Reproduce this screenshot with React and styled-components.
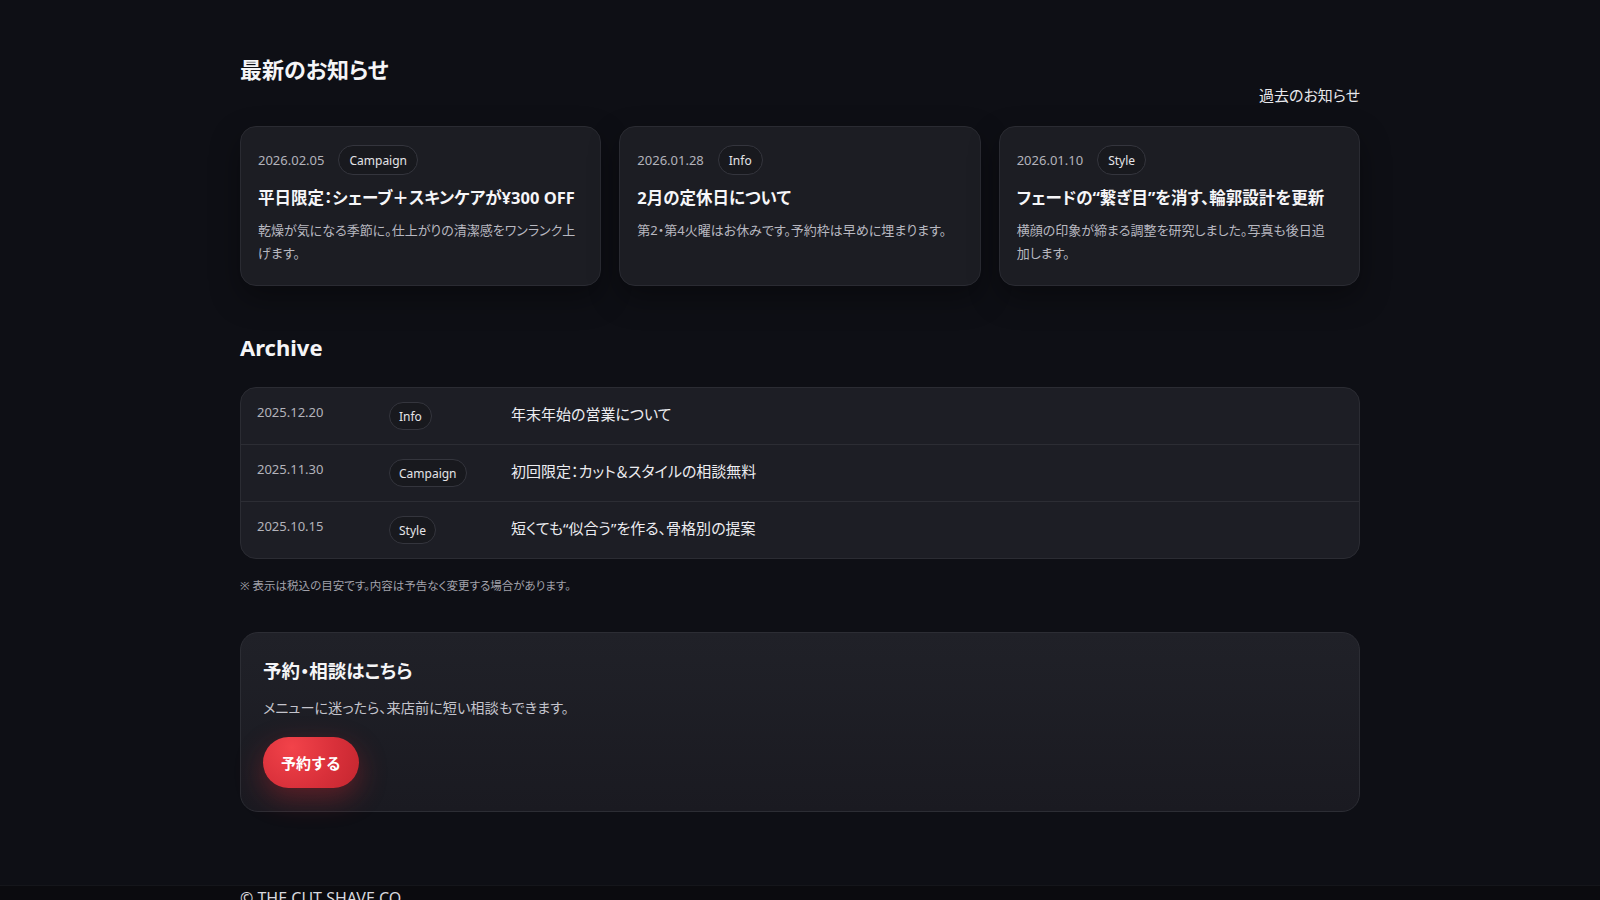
import React from 'react';
import styled, { createGlobalStyle } from 'styled-components';

const GlobalStyle = createGlobalStyle`
  * { box-sizing: border-box; }
  body {
    margin: 0;
    background: #0e0f15;
    color: #f2f2f5;
    font-family: "Noto Sans", "Noto Sans CJK JP", sans-serif;
    font-feature-settings: "palt";
  }
`;

const Main = styled.main`
  width: 1120px;
  margin: 0 auto;
  padding: 52px 0 73px;
`;

const HeaderRow = styled.div`
  display: flex;
  justify-content: space-between;
  align-items: flex-end;
  margin-bottom: 19px;
`;

const Heading = styled.h2`
  margin: ${(p) => (p.$top ? '0 0 21px' : '44px 0 23px')};
  font-size: 22px;
  line-height: 34px;
  font-weight: 700;
  color: #f5f5f7;
`;

const MoreLink = styled.a`
  font-size: 15px;
  line-height: 24px;
  color: #e8e8ec;
  text-decoration: none;
`;

const CardGrid = styled.div`
  display: grid;
  grid-template-columns: repeat(3, 1fr);
  gap: 18px;
`;

const Card = styled.article`
  background: #1c1d23;
  border: 1px solid #2a2b32;
  border-radius: 16px;
  padding: 18px 17px 19px;
  box-shadow: 0 12px 30px rgba(0, 0, 0, 0.35);
`;

const Meta = styled.div`
  display: flex;
  align-items: center;
  gap: 14px;
`;

const DateText = styled.span`
  font-size: 13px;
  line-height: 20.8px;
  color: #b3b3bb;
`;

const Tag = styled.span`
  display: inline-flex;
  align-items: center;
  height: ${(p) => (p.$large ? '30px' : '28px')};
  padding: 0 ${(p) => (p.$large ? '10px' : '9px')};
  border: 1px solid #34353d;
  border-radius: 999px;
  background: #18191e;
  font-size: 12px;
  color: #e4e4e8;
  justify-self: start;
`;

const CardTitle = styled.h3`
  margin: 10px 0 0;
  font-size: 16.5px;
  line-height: 25.5px;
  font-weight: 700;
  color: #f6f6f8;
`;

const CardText = styled.p`
  margin: 8px 0 0;
  max-width: 320px;
  font-size: 13px;
  line-height: 23.8px;
  color: #b8b8c0;
`;

const ArchiveList = styled.div`
  background: #1d1e25;
  border: 1px solid #2b2c33;
  border-radius: 16px;
  overflow: hidden;
`;

const ArchiveRow = styled.div`
  display: grid;
  grid-template-columns: 120px 110px 1fr;
  gap: 12px;
  align-items: start;
  padding: 14px 16px;
  border-top: ${(p) => (p.$first ? 'none' : '1px solid #2c2d34')};
`;

const RowTitle = styled.span`
  font-size: 15px;
  line-height: 24px;
  color: #ececf0;
`;

const Note = styled.p`
  margin: 17px 0 0;
  font-size: 11.5px;
  line-height: 19px;
  color: #a2a2ab;
`;

const Cta = styled.section`
  margin-top: 37px;
  padding: 24px 22px 23px;
  border: 1px solid #2c2d34;
  border-radius: 18px;
  background: linear-gradient(180deg, #202128 0%, #1a1a21 100%);
`;

const CtaTitle = styled.h3`
  margin: 0;
  font-size: 18.5px;
  line-height: 28px;
  font-weight: 700;
  color: #f5f5f7;
`;

const CtaText = styled.p`
  margin: 11px 0 0;
  font-size: 14.2px;
  line-height: 24px;
  color: #c4c4cc;
`;

const ReserveButton = styled.button`
  margin-top: 17px;
  height: 51px;
  padding: 0 18px;
  border: none;
  border-radius: 999px;
  background: radial-gradient(circle at 30% 20%, #f2434a 0%, #d9303a 55%, #c4262f 100%);
  box-shadow: 0 10px 28px rgba(220, 40, 50, 0.35);
  color: #ffffff;
  font-family: inherit;
  font-size: 15px;
  font-weight: 700;
  cursor: pointer;
`;

const Footer = styled.footer`
  background: #0b0b0f;
  border-top: 1px solid #15161b;
  padding: 0 0 24px;
`;

const FooterInner = styled.div`
  width: 1120px;
  margin: 0 auto;
  font-size: 16px;
  line-height: 24px;
  color: #d8d8de;
`;

const latest = [
  {
    date: '2026.02.05',
    tag: 'Campaign',
    title: '平日限定：シェーブ＋スキンケアが¥300 OFF',
    text: '乾燥が気になる季節に。仕上がりの清潔感をワンランク上げます。',
  },
  {
    date: '2026.01.28',
    tag: 'Info',
    title: '2月の定休日について',
    text: '第2・第4火曜はお休みです。予約枠は早めに埋まります。',
  },
  {
    date: '2026.01.10',
    tag: 'Style',
    title: 'フェードの“繋ぎ目”を消す、輪郭設計を更新',
    text: '横顔の印象が締まる調整を研究しました。写真も後日追加します。',
  },
];

const archive = [
  { date: '2025.12.20', tag: 'Info', title: '年末年始の営業について' },
  { date: '2025.11.30', tag: 'Campaign', title: '初回限定：カット＆スタイルの相談無料' },
  { date: '2025.10.15', tag: 'Style', title: '短くても“似合う”を作る、骨格別の提案' },
];

const App = () => {
  return (
    <>
      <GlobalStyle />
      <Main>
        <HeaderRow>
          <Heading $top>最新のお知らせ</Heading>
          <MoreLink href="#">過去のお知らせ</MoreLink>
        </HeaderRow>
        <CardGrid>
          {latest.map((n) => (
            <Card key={n.date}>
              <Meta>
                <DateText>{n.date}</DateText>
                <Tag $large>{n.tag}</Tag>
              </Meta>
              <CardTitle>{n.title}</CardTitle>
              <CardText>{n.text}</CardText>
            </Card>
          ))}
        </CardGrid>

        <Heading>Archive</Heading>
        <ArchiveList>
          {archive.map((a, i) => (
            <ArchiveRow key={a.date} $first={i === 0}>
              <DateText>{a.date}</DateText>
              <Tag>{a.tag}</Tag>
              <RowTitle>{a.title}</RowTitle>
            </ArchiveRow>
          ))}
        </ArchiveList>
        <Note>※ 表示は税込の目安です。内容は予告なく変更する場合があります。</Note>

        <Cta>
          <CtaTitle>予約・相談はこちら</CtaTitle>
          <CtaText>メニューに迷ったら、来店前に短い相談もできます。</CtaText>
          <ReserveButton>予約する</ReserveButton>
        </Cta>
      </Main>
      <Footer>
        <FooterInner>© THE CUT SHAVE CO.</FooterInner>
      </Footer>
    </>
  );
};

export default App;
